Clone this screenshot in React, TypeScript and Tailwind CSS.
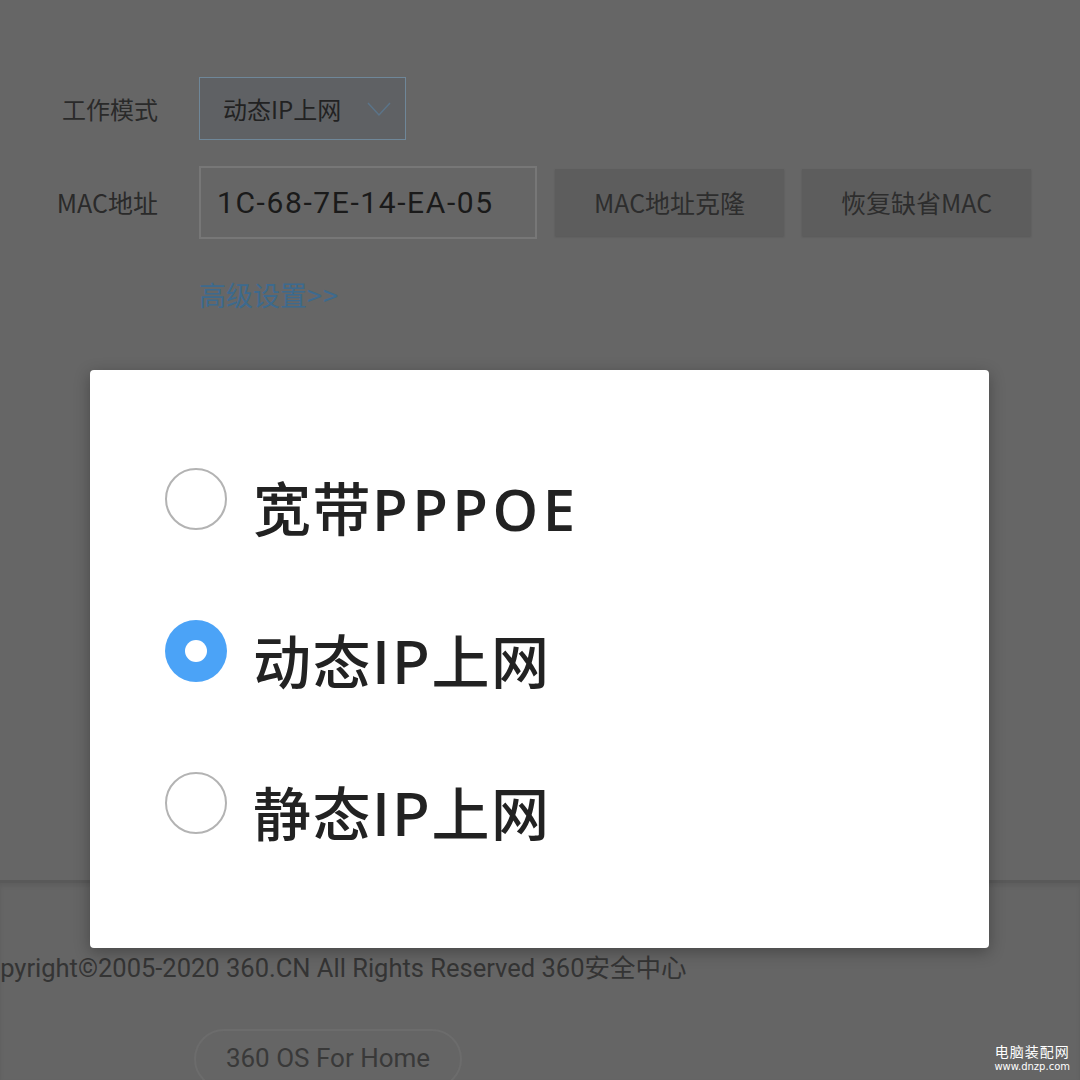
import { useState } from 'react';

const options = [
  { cn: '宽带', en: 'PPPOE', wide: true },
  { cn: '动态', en: 'IP', tail: '上网' },
  { cn: '静态', en: 'IP', tail: '上网' },
];

function Radio({ checked }: { checked: boolean }) {
  if (checked) {
    return (
      <span className="w-[62px] h-[62px] rounded-full bg-[#4ba3f7] flex items-center justify-center shrink-0">
        <span className="w-[22px] h-[22px] rounded-full bg-white" />
      </span>
    );
  }
  return <span className="w-[62px] h-[62px] rounded-full border-[2.5px] border-[#b3b3b3] bg-white shrink-0" />;
}

export default function App() {
  const [mode, setMode] = useState(1);

  return (
    <div className="relative w-[1080px] h-[1080px] overflow-hidden bg-[#666666] font-['Noto_Sans_CJK_SC',sans-serif]">
      {/* page behind the dialog (already dimmed) */}
      <div className="h-[880px] pt-[77px]">
        <div className="flex items-center h-[63px]">
          <span className="w-[158px] text-right text-[24px] text-[#2a2a2a]">工作模式</span>
          <div className="ml-[41px] w-[207px] h-[63px] border-[1.5px] border-[#6f8799] bg-[#5f6164] flex items-center pl-[23px] pr-[14px]">
            <span className="text-[24px] text-[#222]">动态IP上网</span>
            <svg className="ml-auto" width="24" height="16" viewBox="0 0 24 16" fill="none">
              <path d="M1 2l11 12L23 2" stroke="#5b7489" strokeWidth="1.5" />
            </svg>
          </div>
        </div>

        <div className="flex items-center mt-[26px] h-[73px]">
          <span className="w-[158px] text-right text-[25px] text-[#2a2a2a]">MAC地址</span>
          <div className="ml-[41px] w-[338px] h-[73px] border-[2px] border-[#777] flex items-center pl-[16px]">
            <span className="text-[30px] text-[#1a1a1a] font-['Roboto',sans-serif] tracking-[1.6px]">1C-68-7E-14-EA-05</span>
          </div>
          <button className="ml-[18px] w-[229px] h-[67px] bg-[#5d5d5d] text-[25px] text-[#2d2d2d] shadow-[0_1px_2px_rgba(0,0,0,0.15)]">MAC地址克隆</button>
          <button className="ml-[18px] w-[229px] h-[67px] bg-[#5d5d5d] text-[25px] text-[#2d2d2d] shadow-[0_1px_2px_rgba(0,0,0,0.15)]">恢复缺省MAC</button>
        </div>

        <div className="pl-[199px] mt-[36px] text-[27px] text-[#3d6a8e]">
          高级设置<span className="tracking-[1px]">&gt;&gt;</span>
        </div>
      </div>

      <footer className="h-[200px] border-t-[3px] border-[#595959] bg-[#656565] shadow-[inset_0_3px_4px_rgba(0,0,0,0.08)]">
        <p className="mt-[73px] -ml-[31px] whitespace-nowrap text-[25.5px] text-[#343434] font-['Roboto','Noto_Sans_CJK_SC',sans-serif] leading-none">
          Copyright©2005-2020 360.CN All Rights Reserved 360安全中心
        </p>
        <div className="mt-[47px] ml-[194px] w-[268px] h-[60px] rounded-full border-[2px] border-[#6c6c6c] flex items-center justify-center text-[26px] text-[#393939] font-['Roboto',sans-serif]">
          360 OS For Home
        </div>
      </footer>

      {/* dialog */}
      <div className="absolute left-[90px] top-[370px] w-[899px] h-[578px] bg-white rounded-[4px] shadow-[0_4px_16px_rgba(0,0,0,0.3)] pt-[53px] pl-[75px]">
        {options.map((o, i) => (
          <div key={i} className="flex items-center h-[152px] cursor-pointer" onClick={() => setMode(i)}>
            <Radio checked={mode === i} />
            <span className="ml-[26px] text-[58px] font-medium text-[#222] leading-none pt-[16px] tracking-[1.5px] font-['Noto_Sans_CJK_SC',sans-serif]">
              {o.cn}
              <span className={o.wide ? "font-['Open_Sans','Noto_Sans_CJK_SC',sans-serif] font-semibold tracking-[4.5px]" : 'tracking-[2px]'}>{o.en}</span>
              {o.tail}
            </span>
          </div>
        ))}
      </div>

      {/* watermark */}
      <div className="absolute right-[10px] bottom-[7px] text-white text-center leading-tight font-['Noto_Sans_CJK_SC',sans-serif]">
        <div className="text-[14px] tracking-[1px]">电脑装配网</div>
        <div className="text-[10px] font-['DejaVu_Sans',sans-serif]">www.dnzp.com</div>
      </div>
    </div>
  );
}
